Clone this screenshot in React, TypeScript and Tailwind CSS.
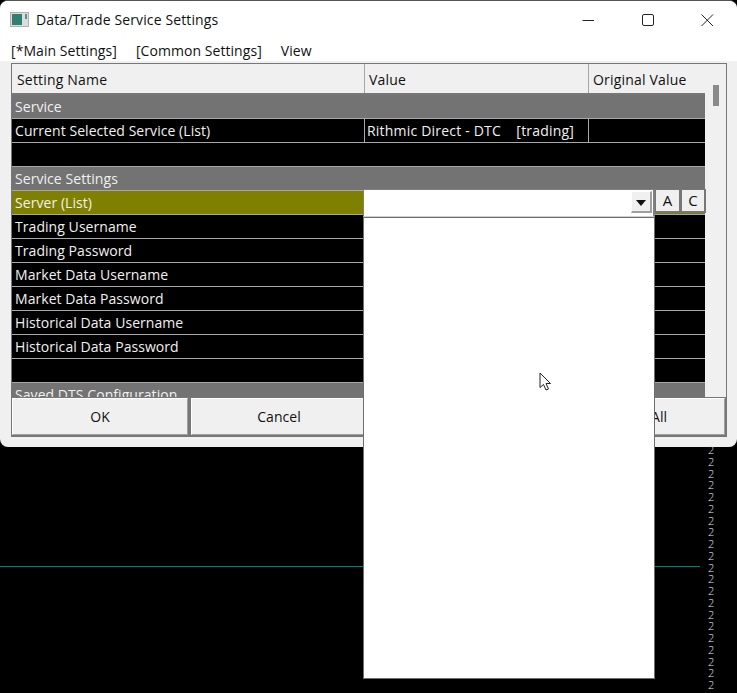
const FONT = "font-['Open_Sans','Noto_Sans',sans-serif]";

function Row({ name, value, original, section, highlight }: { name?: string; value?: string; original?: string; section?: boolean; highlight?: boolean }) {
  if (section) {
    return (
      <div className="h-[24px] bg-[#737373] border-b border-[#a8a8a8] pl-[3px] leading-[23px] text-[#f0f0f0] shrink-0">{name}</div>
    );
  }
  return (
    <div className={`h-[24px] flex border-b border-[#a8a8a8] text-[#f0f0f0] leading-[23px] shrink-0 ${highlight ? "bg-[#808000]" : "bg-black"}`}>
      <div className="w-[352px] pl-[3px] shrink-0">{name}</div>
      {value !== undefined && (
        <>
          <div className="w-[224px] pl-[2px] border-l border-[#a8a8a8] whitespace-pre shrink-0 tracking-[0.2px]">{value}</div>
          <div className="flex-1 border-l border-[#a8a8a8]">{original}</div>
        </>
      )}
    </div>
  );
}

function Btn({ label, className }: { label: string; className: string }) {
  return (
    <div className={`h-[37px] bg-[#f0f0f0] border border-[#fff] border-r-[#a0a0a0] border-b-[#a0a0a0] flex items-center justify-center text-[#111] ${className}`}>{label}</div>
  );
}

export default function App() {
  return (
    <div className={`relative w-[737px] h-[693px] bg-black overflow-hidden text-[14px] tracking-[0.06px] ${FONT}`}>
      <div className="w-[737px] h-[447px] rounded-[8px] bg-[#f0f0f0] overflow-hidden border-t border-[#555] flex flex-col">
        <div className="bg-white h-[60px] shrink-0 flex flex-col">
          <div className="h-[37px] flex items-center pl-[10px] shrink-0">
            <svg width="19" height="15" viewBox="0 0 19 15" className="shrink-0">
              <rect x="0.5" y="0.5" width="18" height="14" fill="#dcdcdc" stroke="#b0b0b0" />
              <rect x="2" y="2" width="10" height="11" fill="#2f7f72" />
              <rect x="15" y="2" width="2" height="5" fill="#5a8f88" />
            </svg>
            <span className="ml-[7px] text-[#111] tracking-[0.12px]">Data/Trade Service Settings</span>
            <div className="ml-auto flex items-center text-[#222]">
              <svg width="14" height="14" viewBox="0 0 14 14" className="mr-[46px]"><path d="M1.5 7.5H13" stroke="#222" strokeWidth="1" /></svg>
              <svg width="14" height="14" viewBox="0 0 14 14" className="mr-[45px]"><rect x="1.5" y="1.5" width="11" height="11" rx="1.5" fill="none" stroke="#222" strokeWidth="1" /></svg>
              <svg width="14" height="14" viewBox="0 0 14 14" className="mr-[23px]"><path d="M1.5 1.5L13 13M13 1.5L1.5 13" stroke="#222" strokeWidth="1" fill="none" /></svg>
            </div>
          </div>
          <div className="flex items-center pl-[11px] h-[24px] text-[#111] shrink-0">
            <span>[*Main Settings]</span>
            <span className="ml-[19px]">[Common Settings]</span>
            <span className="ml-[19px]">View</span>
          </div>
        </div>

        <div className="mt-[2px] ml-[11px] w-[716px] h-[374px] border-t border-l border-r border-[#777] flex flex-col shrink-0">
          <div className="flex h-[333px] overflow-hidden shrink-0">
            <div className="w-[693px] flex flex-col shrink-0">
              <div className="h-[31px] flex bg-[#f0f0f0] border-b-2 border-[#777] leading-[31px] text-[#111] tracking-[0.18px] shrink-0">
                <div className="w-[352px] pl-[5px] shrink-0">Setting Name</div>
                <div className="w-[224px] pl-[4px] border-l border-[#a8a8a8] shrink-0">Value</div>
                <div className="flex-1 pl-[4px] border-l border-[#a8a8a8]">Original Value</div>
              </div>
              <Row section name="Service" />
              <Row name="Current Selected Service (List)" value="Rithmic Direct - DTC    [trading]" original="" />
              <Row name="" />
              <Row section name="Service Settings" />
              <Row highlight name="Server (List)" />
              <Row name="Trading Username" />
              <Row name="Trading Password" />
              <Row name="Market Data Username" />
              <Row name="Market Data Password" />
              <Row name="Historical Data Username" />
              <Row name="Historical Data Password" />
              <Row name="" />
              <Row section name="Saved DTS Configuration" />
            </div>
            <div className="flex-1 bg-[#f0f0f0] pl-[8px] pt-[21px]">
              <div className="w-[6px] h-[21px] bg-[#8a8a8a]" />
            </div>
          </div>
          <div className="flex bg-[#777] h-[40px] pt-[1px] gap-[3px] shrink-0">
            <Btn label="OK" className="w-[176px]" />
            <Btn label="Cancel" className="w-[176px]" />
            <Btn label="" className="flex-1 mr-[1px]" />
          </div>
        </div>
      </div>

      <div className="absolute left-[651px] top-[398px] h-[37px] flex items-center text-[#111]">
        <span>All</span>
      </div>

      {/* chart remnant */}
      <div className="absolute left-0 top-[566px] w-[700px] h-px bg-[#008080]" />
      <div className="absolute left-[708px] top-[444px] flex flex-col text-[11px] font-light leading-[11.75px] text-[#e8e8e8]">
        {Array.from({ length: 21 }).map((_, i) => (
          <span key={i}>2</span>
        ))}
      </div>

      {/* combo box editor */}
      <div className="absolute left-[363px] top-[189px] w-[343px] h-[28px] flex">
        <div className="w-[292px] h-[28px] bg-white border border-[#808080] border-r-2 border-b-[#d0d0d0] flex justify-end pt-[1px] pr-[1px]">
          <div className="w-[21px] h-[22px] bg-[#f0f0f0] border-t border-l border-white border-r-2 border-b-2 border-r-[#a0a0a0] border-b-[#a0a0a0] flex items-center justify-center">
            <svg width="10" height="6" viewBox="0 0 10 6" className="mt-[2px]"><path d="M0 0H10L5 6Z" fill="#111" /></svg>
          </div>
        </div>
        <div className="flex-1 bg-[#777] h-[24px] flex gap-[3px] pt-[1px] pl-[1px]">
          <div className="w-[23px] h-[21px] bg-[#f0f0f0] flex items-center justify-center text-[#111] text-[15px]">A</div>
          <div className="w-[22px] h-[21px] bg-[#f0f0f0] flex items-center justify-center text-[#111] text-[15px]">C</div>
        </div>
      </div>

      {/* dropdown list */}
      <div className="absolute left-[363px] top-[217px] w-[292px] h-[462px] bg-white border border-[#6e6e6e]">
        <svg width="14" height="20" viewBox="0 0 14 20" className="absolute left-[175px] top-[154px]">
          <path d="M1 1V15.5L4.5 12.5L7 18L9.5 17L7 11.5H11.5Z" fill="white" stroke="#222" strokeWidth="1" />
        </svg>
      </div>
    </div>
  );
}
